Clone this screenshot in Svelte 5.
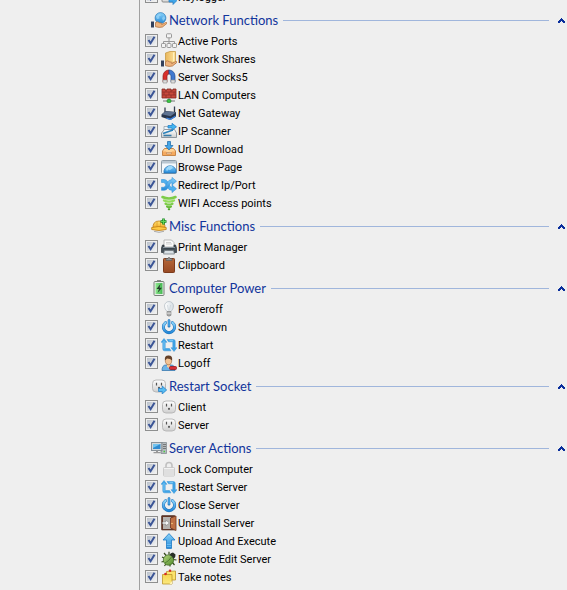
<script>
  const power = `<path d="M4.600 3.600a5.600 5.600 0 1 0 6.800 0" fill="none" stroke="#1c6fb8" stroke-width="3" stroke-linecap="round"/><path d="M4.600 3.600a5.600 5.600 0 1 0 6.800 0" fill="none" stroke="url(#g-sky)" stroke-width="2" stroke-linecap="round"/><path d="M8 1.500v6" stroke="#efefef" stroke-width="4"/><path d="M8 1.500v5.800" stroke="#1c6fb8" stroke-width="2.600" stroke-linecap="round"/><path d="M8 1.500v5.600" stroke="#4fb0ee" stroke-width="1.400" stroke-linecap="round"/>`;
  const restart = `<g stroke="#3593d8" stroke-width=".5" stroke-linejoin="round"><path d="M3 1.500 6 5.300H4.200v6.200H8.500l1.500 2.300H3.500Q1.800 13.800 1.800 12V5.300H0z" fill="#3fa4e6"/><path d="M13 14.500 10 10.700h1.800V4.800H7.500L6 2.500h6.500Q14.200 2.500 14.200 4.300v6.400H16z" fill="#3fa4e6"/></g><path d="M3 4v8.300M8.500 3.600H12" fill="none" stroke="#8ad3fa" stroke-width=".8"/>`;
  const socket = `<rect x="1.500" y="2" width="13" height="12" rx="3.500" fill="url(#g-silver)" stroke="#b4b4b4" stroke-width=".9"/><path d="M5.500 4.800v2.800M10.500 4.800v2.800" stroke="#555" stroke-width="1.200"/><path d="M7.200 10.800V9.600a.8.800 0 0 1 1.600 0v1.200z" fill="#444"/>`;
  const hand = `<path d="M0 9.500h3v6H0z" fill="#33415c"/><path d="M3 10h1.500v5H3z" fill="#f4f4f4"/><path d="M4.500 10.500q2-1.500 4 .3l2 .4q1.200.5.200 1.300l4-2q1.600-.3 1.100 1L11.500 15q-3 1-7-.3z" fill="#eeb27b" stroke="#a7683a" stroke-width=".7"/>`;

  const icons = {
    keylogger: `<rect x="1" y="4" width="12" height="9" rx="1" fill="#ddd" stroke="#888"/><path d="M3 10.500h8" stroke="#999"/><path d="M8 10h4V7.500l4 4-4 4V13H8z" fill="#42a6e8" stroke="#1c78c4" stroke-width=".7"/>`,
    network: `<circle cx="9.500" cy="6" r="5.400" fill="url(#g-sky)" stroke="#2878b8" stroke-width=".7"/><path d="M5 4.500q2-3 4-2.500l1 1.500-2 1 .5 2-2.500.5zM11 6l2-2 1.300 2.500L12 9z" fill="#9bd5f7" opacity=".75"/>${hand}`,
    ports: `<g fill="#f3f3f3" stroke="#999"><path d="M8 5v3M2.500 11V8.500h11V11M8 8v3" fill="none"/><rect x="5.500" y=".8" width="5" height="4" rx=".7"/><rect x=".5" y="10.500" width="4" height="4" rx=".7"/><rect x="6" y="10.500" width="4" height="4" rx=".7"/><rect x="11.500" y="10.500" width="4" height="4" rx=".7"/></g>`,
    shares: `<path d="M4.500 2 9 .5h5.500v12h-10z" fill="url(#g-folder)" stroke="#c89a45" stroke-width=".8"/><path d="M12.500 1.500V10" stroke="#fff0bd"/>${hand}`,
    magnet: `<path d="M2 13V7a6 6 0 0 1 6-6v4a2 2 0 0 0-2 2v6z" fill="#d9302b" stroke="#8e1d1c" stroke-width=".7"/><path d="M14 13V7a6 6 0 0 0-6-6v4a2 2 0 0 1 2 2v6z" fill="#3f78cf" stroke="#234c91" stroke-width=".7"/><path d="M2 11h4v3H2zM10 11h4v3h-4z" fill="#ddd" stroke="#888" stroke-width=".6"/>`,
    lan: `<path d="M1 2h3v1h2V2h4v1h2V2h3v9H1z" fill="#c9483b" stroke="#842a22" stroke-width=".8"/><path d="M1 5h14M1 8h14M5 3v2M10 3v2M3 5v3M8 5v3M13 5v3M5 8v3M10 8v3" stroke="#8f3129" stroke-width=".8"/><path d="M8 11v3M2 14h12" stroke="#777" stroke-width="1.200"/><rect x="6" y="12.500" width="4" height="3" rx="1" fill="#39c443" stroke="#168222" stroke-width=".6"/>`,
    gateway: `<path d="M4 7V2.500M13.500 7V1.500" stroke="#343e50" stroke-width="1.300"/><path d="m.5 9.500 4-3.500 10.500 1v4.500l-5.500 3.500-9-3z" fill="#28354c"/><path d="m.8 9.300 4-3L15 7.300l-5.500 4z" fill="#5f7392"/><path d="m5.500 12.500 4 1 5-3v1.500l-5 3-4-1z" fill="#3d83e0"/>`,
    scanner: `<path d="M3 3.500h9v5H3z" fill="#eef4f8" stroke="#8b98a2" stroke-width=".7"/><path d="m.5 10 3-3.500h10L15.500 10v4.500H.5z" fill="url(#g-silver)" stroke="#77838d" stroke-width=".8"/><path d="m2 10.500 10-3.500" stroke="#2b82bb" stroke-width="1.600"/><path d="M2.500 12.500h8" stroke="#357ba8" stroke-width="1.600"/><path d="M7 2.500h4V.3l4.500 3.500L11 7.300V5H7z" fill="#45b5ef" stroke="#1c78c4" stroke-width=".7"/>`,
    download: `<path d="m1.500 10 2-2.500h9l2 2.500v4.500h-13z" fill="#ffd396" stroke="#c27d3a" stroke-width=".9"/><path d="M2 10.500h3L6 12h4l1-1.500h3V14H2z" fill="#f5aa5f"/><path d="M5.500 11.500h5v1.300h-5z" fill="#fff3df" stroke="#a96631" stroke-width=".5"/><path d="M6.500.5h3V4.500H12L8 9 4 4.500h2.500z" fill="#45a6e7" stroke="#1767a7" stroke-width=".7"/>`,
    browse: `<rect x=".5" y="1.500" width="15" height="13" rx="1" fill="#f4f8fb" stroke="#8e9ca7"/><path d="M1 2h14v2.500H1z" fill="#b9c6d0"/><path d="M3 14a6.200 6.200 0 0 1 12-3v3z" fill="url(#g-sky)" stroke="#2272b5" stroke-width=".7"/><path d="M5 10q2.500-4 6-3l1 2-3 2-2-.5-1 2z" fill="#9dd9fa"/>`,
    redirect: `<g stroke="#3593d8" stroke-width=".6"><path d="M.5 2.500h2.800q2.200 0 3.500 2.500l1.500 3q1.200 2.500 2.700 2.500V8l4.500 3.800L11 15.600v-2.300q-3.200 0-4.700-2.800L4.700 7.400Q3.700 5.500 2.500 5.500h-2z" fill="#4fb0ee"/><path d="M.5 13.300v-3h2q1.200 0 2.200-1.900l1.600-3Q7.800 2.600 11 2.600V.4l4.500 3.800L11 8V5.600q-1.500 0-2.700 2.400l-1.500 3q-1.300 2.300-3.500 2.300z" fill="url(#g-sky)"/></g>`,
    wifi: `<g fill="none" stroke-linecap="round"><path d="M1.500 2q6.500 3 13 0" stroke="#7dcc49" stroke-width="2.500"/><path d="M3 5.400q5 2.600 10 0" stroke="#93dc5b" stroke-width="2.300"/><path d="M4.500 8.700q3.500 2 7 0" stroke="#7dcc49" stroke-width="2.200"/><path d="M6 11.600q2 1.200 4 0" stroke="#67bb36" stroke-width="2"/><path d="M7.700 14.300h.6" stroke="#4ba32a" stroke-width="1.900"/></g>`,
    helmet: `<path d="M2 10.500Q1.500 3 8 3t6 7.500z" fill="url(#g-gold)" stroke="#bd7b14" stroke-width=".8"/><path d="M6 3.500v6M9.500 3.500v6" stroke="#e0a02c" stroke-width=".8"/><path d="M.7 9.500q7-2 14.500 0v2Q8 13.500.7 11.500z" fill="#ffca43" stroke="#bd7b14" stroke-width=".8"/><path d="M3 13.300q5 2 10 0" fill="none" stroke="#aaa"/><path d="M12.500.5v6M9.500 3.500h6" stroke="#168221" stroke-width="2.600"/><path d="M12.500 1v5M10 3.500h5" stroke="#5ed358" stroke-width="1.200"/>`,
    printer: `<path d="M3 1h7.500L13 3.500V8H3z" fill="#fafafa" stroke="#aaa" stroke-width=".8"/><path d="M5 3.500h5M5 5h6" stroke="#bbb" stroke-width=".7"/><path d="M1.500 6H3v3h10V6h1.500l1 3v4.500H.5V9z" fill="#465159" stroke="#293138" stroke-width=".7"/><path d="M2 8.500h12" stroke="#8b969e"/><path d="M3.500 11.500h9l1 3.500h-11z" fill="#d9e1e5" stroke="#6b7378" stroke-width=".7"/>`,
    clipboard: `<rect x="2.500" y="1.500" width="11" height="14" rx=".8" fill="url(#g-brown)" stroke="#7c3b1c"/><path d="M5 1.500h2l.5-1h1l.5 1h2v2H5z" fill="#929292" stroke="#555" stroke-width=".6"/>`,
    battery: `<path d="M6 0h4v2H6z" fill="#888"/><rect x="3" y="1.500" width="10" height="14" rx="1" fill="#e8eee8" stroke="#788078"/><path d="M4.500 3h7v11h-7z" fill="url(#g-green)"/><path d="M9.500 4 5.500 9H8l-1.500 4L11 7.800H8.500z" fill="#253a2a"/>`,
    bulb: `<path d="M6 10.500Q3.500 8 3.500 5a4.500 4.500 0 0 1 9 0q0 3-2.500 5.500z" fill="url(#g-glass)" stroke="#b8c0c6" stroke-width=".8"/><path d="m6.500 4 1 5.500M9.500 4l-1 5.500" stroke="#c5ced4" stroke-width=".7"/><path d="M6 10.500h4v3.800q-2 1.700-4 0z" fill="#aaa" stroke="#808080" stroke-width=".6"/><path d="M6 12.200h4" stroke="#eee" stroke-width=".7"/>`,
    power,
    restart,
    user: `<path d="M1 15.500Q1 10 5 10h5q4 0 4 5.500z" fill="#6fb4e6" stroke="#3879ae" stroke-width=".8"/><path d="M6 9h3v2.500L7.500 13 6 11.500z" fill="#f5c798"/><ellipse cx="7.500" cy="5.500" rx="3.200" ry="4.200" fill="#f3c394" stroke="#9a633d" stroke-width=".6"/><path d="M4 5.500Q3 .5 7.500.5T11 5.500Q9.500 3.500 6 3.500z" fill="#644028"/><rect x="8.500" y="11.500" width="7" height="3" rx="1" fill="#d82e35" stroke="#971821" stroke-width=".8"/>`,
    socket,
    socketArrow: `${socket}<path d="M7.500 10.500h3.700V8l4.500 4-4.500 4v-2.500H7.500z" fill="#57bdf3" stroke="#1c78c4" stroke-width=".7"/>`,
    computer: `<rect x=".5" y="2.500" width="10.500" height="8" fill="#d4d9dc" stroke="#899299"/><path d="M2 4h7.500v5H2z" fill="#2f8bd0"/><path d="M2 4h7.500L2 8z" fill="#73c4ef"/><path d="M5 10.500h2V12h2.500v1.300h-7V12H5z" fill="#999"/><path d="M11 2.500h4.500v11H10V11h1z" fill="#b4babd" stroke="#7c858a" stroke-width=".7"/><path d="M12 4.500h3M12 6.500h3M12 8.500h3" stroke="#666" stroke-width=".8"/><path d="M12.500 11.500H14" stroke="#4acb45" stroke-width="1.500"/>`,
    lock: `<path d="M5 8V4.500a3 3 0 0 1 6 0V8" fill="none" stroke="#c0c0c0" stroke-width="1.600"/><rect x="2.500" y="6.500" width="11" height="8.500" rx=".7" fill="#f2f2f2" stroke="#c2c2c2" stroke-width=".8"/><path d="M3 9h10M3 11h10M3 13h10" stroke="#ccc"/>`,
    door: `<path d="M.8.800h13v14H.8z" fill="#6b3928" stroke="#4d281d"/><path d="M2 2h8v12H2z" fill="#b6b2ae"/><path d="m9.500 3 5.500-2v14.500L9.500 13z" fill="#bf7043" stroke="#713722" stroke-width=".8"/><circle cx="11" cy="8.500" r=".7" fill="#ffdf8c"/><path d="M1.500 7h3.300V5l3.500 3-3.500 3V9H1.500z" fill="#f7f7f7" stroke="#777" stroke-width=".5"/>`,
    upload: `<path d="M8 .6 14 7h-3.500v8.400h-5V7H2z" fill="url(#g-sky)" stroke="#1c78c4" stroke-width=".8"/><path d="M5.900 11.500h4.200M5.900 13.600h4.200" stroke="#7cc8f5" stroke-width=".7"/>`,
    bug: `<path d="m3 2 2.500 3M8 .8v3M1 6l3 1.500M.5 11 4 10M3.500 15l2-3M9 15.500V12M13.500 14l-2.500-3M15.500 9 12 8.500" stroke="#35491d" stroke-width="1.200"/><circle cx="7.500" cy="9" r="5.200" fill="url(#g-bug)" stroke="#3b6421" stroke-width=".7"/><path d="M8.500 4q1-2.500 3.500-2.500l2.500 2q.5 2.500-2 4.500-1-3-4-4z" fill="#293027"/><path d="M4 12q4-2 6.500-6" fill="none" stroke="#3b6421" stroke-width=".7"/>`,
    notes: `<path d="M5.500 2.500 14.500 2v9h-9z" fill="#fbe36d" stroke="#bd972c" stroke-width=".8"/><path d="M1.500 5.500H11v9.500H1.500z" fill="url(#g-note)" stroke="#bd972c" stroke-width=".8"/><path d="M11 12 8.500 15H11z" fill="#fff5b8"/><circle cx="4.500" cy="5" r="1.300" fill="#d92b22"/><circle cx="9" cy="1.800" r="1.300" fill="#d92b22"/>`,
  };

  let loose = $state([{ label: 'Keylogger', icon: 'keylogger', on: true }]);

  const list = (...pairs) => pairs.map(([label, icon]) => ({ label, icon, on: true }));

  let groups = $state([
    {
      title: 'Network Functions', icon: 'network', open: true,
      items: list(
        ['Active Ports', 'ports'], ['Network Shares', 'shares'], ['Server Socks5', 'magnet'],
        ['LAN Computers', 'lan'], ['Net Gateway', 'gateway'], ['IP Scanner', 'scanner'],
        ['Url Download', 'download'], ['Browse Page', 'browse'], ['Redirect Ip/Port', 'redirect'],
        ['WIFI Access points', 'wifi']
      ),
    },
    {
      title: 'Misc Functions', icon: 'helmet', open: true,
      items: list(['Print Manager', 'printer'], ['Clipboard', 'clipboard']),
    },
    {
      title: 'Computer Power', icon: 'battery', open: true,
      items: list(['Poweroff', 'bulb'], ['Shutdown', 'power'], ['Restart', 'restart'], ['Logoff', 'user']),
    },
    {
      title: 'Restart Socket', icon: 'socketArrow', open: true,
      items: list(['Client', 'socket'], ['Server', 'socket']),
    },
    {
      title: 'Server Actions', icon: 'computer', open: true,
      items: list(
        ['Lock Computer', 'lock'], ['Restart Server', 'restart'], ['Close Server', 'power'],
        ['Uninstall Server', 'door'], ['Upload And Execute', 'upload'],
        ['Remote Edit Server', 'bug'], ['Take notes', 'notes']
      ),
    },
  ]);
</script>

{#snippet glyph(name)}
  <svg class="icon" viewBox="0 0 16 16" aria-hidden="true">{@html icons[name]}</svg>
{/snippet}

{#snippet row(item)}
  <li>
    <label class="row">
      <input type="checkbox" bind:checked={item.on} />
      {@render glyph(item.icon)}
      <span>{item.label}</span>
    </label>
  </li>
{/snippet}

<svg class="defs" aria-hidden="true">
  <defs>
    <linearGradient id="g-sky" x2="0" y2="1"><stop stop-color="#8ad3fa" /><stop offset="1" stop-color="#2388d8" /></linearGradient>
    <linearGradient id="g-silver" x2="0" y2="1"><stop stop-color="#ffffff" /><stop offset="1" stop-color="#cfcfcf" /></linearGradient>
    <linearGradient id="g-folder"><stop stop-color="#e9b75c" /><stop offset="1" stop-color="#ffe39a" /></linearGradient>
    <linearGradient id="g-gold" x2="0" y2="1"><stop stop-color="#ffe477" /><stop offset="1" stop-color="#f3a41e" /></linearGradient>
    <linearGradient id="g-brown" x2="0" y2="1"><stop stop-color="#b5673a" /><stop offset="1" stop-color="#984a24" /></linearGradient>
    <linearGradient id="g-green"><stop stop-color="#8fe88f" /><stop offset="1" stop-color="#43b851" /></linearGradient>
    <linearGradient id="g-glass"><stop stop-color="#ffffff" /><stop offset="1" stop-color="#d5dde3" /></linearGradient>
    <linearGradient id="g-bug" x2="1" y2="1"><stop stop-color="#b6d77e" /><stop offset="1" stop-color="#4f8a2b" /></linearGradient>
    <linearGradient id="g-note" x2="0" y2="1"><stop stop-color="#f6d750" /><stop offset="1" stop-color="#fbe87e" /></linearGradient>
  </defs>
</svg>

<main>
  <aside></aside>
  <div class="panel">
    <div class="scroll">
      <ul>
        {#each loose as item}
          {@render row(item)}
        {/each}
      </ul>
      {#each groups as group}
        <section>
          <header>
            {@render glyph(group.icon)}
            <h2>{group.title}</h2>
            <span class="rule"></span>
            <button
              type="button"
              aria-label="Toggle {group.title}"
              aria-expanded={group.open}
              onclick={() => (group.open = !group.open)}
            >
              <svg class="chevron" class:closed={!group.open} viewBox="0 0 7 5" shape-rendering="crispEdges" aria-hidden="true">
                <path d="M3 0h1v1h1v1h1v1h1v2H5V4H4V3H3v1H2v1H0V3h1V2h1V1h1z" fill="#0a2f9c" />
              </svg>
            </button>
          </header>
          {#if group.open}
            <ul>
              {#each group.items as item}
                {@render row(item)}
              {/each}
            </ul>
          {/if}
        </section>
      {/each}
    </div>
  </div>
</main>

<style>
  :global(body) {
    background: #efefef;
  }

  .defs {
    position: absolute;
    width: 0;
    height: 0;
  }

  main {
    display: flex;
    height: 100vh;
    overflow: hidden;
    background: #efefef;
    color: #000;
    font: 11px/16px Tahoma, Roboto, sans-serif;
  }

  aside {
    flex: 0 0 139px;
    border-right: 1px solid #a0a0a0;
  }

  .panel {
    flex: 1;
    min-width: 0;
    overflow: hidden;
  }

  /* The list is scrolled down, so its first row is partly cut off. */
  .scroll {
    margin-top: -12px;
  }

  ul {
    margin: 0;
    padding: 0 0 0 5px;
    list-style: none;
  }

  .row {
    display: flex;
    align-items: flex-end;
    height: 18px;
    white-space: nowrap;
  }

  .icon {
    flex: none;
    width: 16px;
    height: 16px;
  }

  .row .icon {
    margin: 0 1px 1px 3px;
  }

  input {
    appearance: none;
    flex: none;
    box-sizing: border-box;
    width: 13px;
    height: 13px;
    margin: 0 0 3px;
    border: 1px solid #8e8f8f;
    padding: 1px;
    background: linear-gradient(135deg, #b9c0ca, #f2f3f4) content-box #f4f4f4;
  }

  input:checked {
    background:
      url("data:image/svg+xml,%3Csvg xmlns='http://www.w3.org/2000/svg' viewBox='0 0 11 11'%3E%3Cpath d='M2.500 5 4.600 8.200 8.500 1.800' fill='none' stroke='%233b5596' stroke-width='2'/%3E%3C/svg%3E") border-box center / 11px 11px no-repeat,
      linear-gradient(135deg, #b9c0ca, #f2f3f4) content-box #f4f4f4;
  }

  header {
    display: flex;
    align-items: center;
    height: 24px;
    padding: 2px 2px 0 11px;
  }

  h2 {
    margin: 0 5px 0 2px;
    color: #12359c;
    font: 13px/18px "Segoe UI", Lato, sans-serif;
    white-space: nowrap;
  }

  .rule {
    flex: 1;
    height: 1px;
    background: #a0b6dc;
  }

  button {
    display: flex;
    margin-left: 9px;
    padding: 0;
    border: 0;
    background: none;
  }

  .chevron {
    width: 7px;
    height: 5px;
  }

  .closed {
    transform: rotate(180deg);
  }
</style>
